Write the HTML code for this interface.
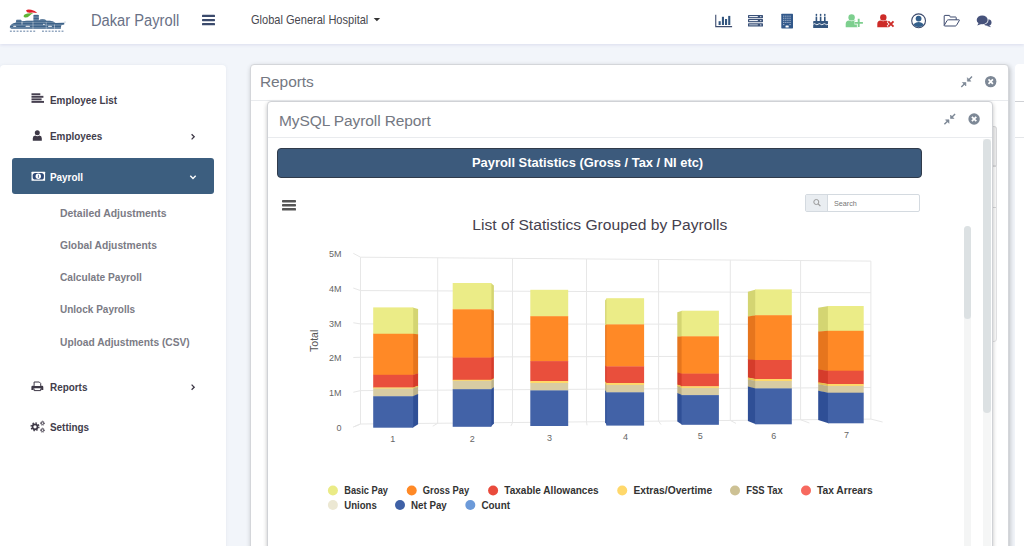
<!DOCTYPE html>
<html>
<head>
<meta charset="utf-8">
<title>Dakar Payroll</title>
<style>
*{box-sizing:border-box;margin:0;padding:0}
html,body{width:1024px;height:546px;overflow:hidden}
body{background:#f2f5fa;font-family:"Liberation Sans",sans-serif;position:relative;color:#333}
.abs{position:absolute}
#hdr{left:0;top:0;width:1024px;height:44px;background:#fff;box-shadow:0 1px 3px rgba(140,140,200,.22)}
#brand{left:91px;top:11px;font-size:16px;color:#697186;white-space:nowrap;line-height:20px;transform-origin:0 50%;transform:scaleX(.918)}
#org{left:251px;top:12px;font-size:13px;color:#48484f;white-space:nowrap;line-height:16px;transform-origin:0 50%;transform:scaleX(.85)}
#side{left:0;top:65px;width:226px;height:490px;background:#fff;border-radius:4px 4px 0 0;box-shadow:0 0 3px rgba(120,130,160,.12)}
.mi{position:absolute;left:50px;font-size:11px;font-weight:bold;color:#423d4c;white-space:nowrap;line-height:14px;transform-origin:0 50%;transform:scaleX(.9)}
.sub{position:absolute;left:60px;font-size:11px;font-weight:bold;color:#7b7b85;white-space:nowrap;line-height:14px;transform-origin:0 50%;transform:scaleX(.93)}
#act{left:12px;top:158px;width:202px;height:36px;background:#3c5e7f;border-radius:3px}
#main{left:1014.7px;top:63.5px;width:30px;height:500px;background:#fff;border-radius:4px}
#w1{left:250px;top:64px;width:759px;height:500px;background:#fff;border:1px solid #d4d6da;border-radius:4px;box-shadow:1px 2px 5px rgba(0,0,0,.24)}
#w2{left:267px;top:101px;width:726px;height:470px;background:#fff;border:1px solid #d0d2d6;border-radius:4px;box-shadow:0 2px 4px rgba(0,0,0,.24)}
.wt{position:absolute;font-size:15.5px;color:#747882;white-space:nowrap;line-height:20px;letter-spacing:-.1px}
#ban{left:277px;top:148px;width:645px;height:30px;background:#3c5a7c;border:1px solid #303b4b;border-radius:4px;color:#fff;font-weight:bold;font-size:12.9px;text-align:left;padding-left:194px;line-height:28px;white-space:nowrap}
#srch{left:805px;top:194px;width:115px;height:18px;border:1px solid #d4dae0;border-radius:2px;background:#fff}
#srch i{position:absolute;left:0;top:0;width:22px;height:16px;background:#e9edf1;border-right:1px solid #d4dae0}
#srch span{position:absolute;left:28px;top:3.5px;font-size:8px;color:#777;line-height:10px;transform-origin:0 50%;transform:scaleX(.9)}
</style>
</head>
<body>
<div id="hdr" class="abs"></div>
<div id="brand" class="abs">Dakar Payroll</div>
<div id="org" class="abs">Global General Hospital</div>

<div id="side" class="abs"></div>
<div class="mi" style="top:92.7px">Employee List</div>
<div class="mi" style="top:129px">Employees</div>
<div id="act" class="abs"></div>
<div class="mi" style="top:170px;color:#fff">Payroll</div>
<div class="sub" style="top:205.6px;transform:scaleX(.95)">Detailed Adjustments</div>
<div class="sub" style="top:237.6px;transform:scaleX(.936)">Global Adjustments</div>
<div class="sub" style="top:269.8px;transform:scaleX(.924)">Calculate Payroll</div>
<div class="sub" style="top:301.8px;transform:scaleX(.91)">Unlock Payrolls</div>
<div class="sub" style="top:334.8px">Upload Adjustments (CSV)</div>
<div class="mi" style="top:380px">Reports</div>
<div class="mi" style="top:419.8px">Settings</div>

<div id="main" class="abs"></div>
<div class="abs" style="left:1015px;top:101px;width:9px;height:1px;background:#cfd1d5"></div>
<div class="abs" style="left:1015px;top:137px;width:9px;height:1px;background:#e4e6e9"></div>
<div id="w1" class="abs"></div>
<div class="wt" style="left:260px;top:72px">Reports</div>
<div class="abs" style="left:251px;top:100px;width:757px;height:1px;background:#e9ebee"></div>
<div class="abs" style="left:985px;top:126px;width:11.5px;height:216px;background:#fafafa;border:1px solid #e2e2e4;border-radius:0 3px 3px 0"></div>
<div class="abs" style="left:985px;top:126px;width:11.5px;height:40px;background:#eeeeef;border:1px solid #d9d9db;border-radius:0 3px 0 0"></div>
<div class="abs" style="left:992px;top:165.600px;width:4px;height:1px;background:#d6d6d8"></div>
<div class="abs" style="left:992px;top:206.500px;width:4px;height:1px;background:#d6d6d8"></div>
<div id="w2" class="abs"></div>
<div class="abs" style="left:983.3px;top:138.500px;width:8px;height:420px;background:#f5f6f6"></div>
<div class="abs" style="left:983.3px;top:138.500px;width:8px;height:274px;background:#dce1e3;border-radius:4px"></div>
<div class="abs" style="left:963.5px;top:226.400px;width:7.3px;height:330px;background:#f4f5f5;border-radius:4px 4px 0 0"></div>
<div class="abs" style="left:963.5px;top:226.400px;width:7.3px;height:92.600px;background:#dce1e3;border-radius:3.6px"></div>
<div class="wt" style="left:279px;top:111px">MySQL Payroll Report</div>
<div class="abs" style="left:268px;top:137px;width:724px;height:1px;background:#e9ebee"></div>
<div id="ban" class="abs">Payroll Statistics (Gross / Tax / NI etc)</div>
<div id="srch" class="abs"><i></i><span>Search</span></div>

<svg class="abs" style="left:0;top:0" width="1024" height="546" viewBox="0 0 1024 546">
<g stroke="#e7e7e7" stroke-width="1" fill="none">
<path d="M353.3 253.3 L360.5 257.2 L870.9 261.1"/>
<path d="M353.3 288.04 L360.5 290.56 L870.9 292.7"/>
<path d="M353.3 322.78 L360.5 323.92 L870.9 324.3"/>
<path d="M353.3 357.52 L360.5 357.28 L870.9 355.9"/>
<path d="M353.3 392.26 L360.5 390.64 L870.9 387.5"/>
<path d="M353.3 427 L360.5 424 L870.9 419.1"/>
<path d="M360.5 257.2 L360.5 424 L353.3 427"/>
<path d="M437.7 257.79 L437.7 423.26 L432.8 426.2"/>
<path d="M512.5 258.36 L512.5 422.54 L510.9 426"/>
<path d="M586.5 258.93 L586.5 421.83 L587 425.3"/>
<path d="M658.6 259.48 L658.6 421.14 L661 424.6"/>
<path d="M730.3 260.03 L730.3 420.45 L736 423.4"/>
<path d="M800.6 260.56 L800.6 419.77 L809.4 423"/>
<path d="M870.9 261.1 L870.9 419.1 L882.6 422"/>
</g>
<path d="M412.6 307.4 L418.1 308.98 L418.1 334.52 L412.6 334.05Z" fill="#d4d572"/>
<path d="M412.6 333.75 L418.1 334.22 L418.1 373.85 L412.6 375.1Z" fill="#e6751d"/>
<path d="M412.6 374.8 L418.1 373.55 L418.1 386.01 L412.6 387.8Z" fill="#d53c2b"/>
<path d="M412.6 387.5 L418.1 385.71 L418.1 387.07 L412.6 388.9Z" fill="#e8c04f"/>
<path d="M412.6 388.6 L418.1 386.77 L418.1 394.4 L412.6 396.55Z" fill="#bcb189"/>
<path d="M412.6 396.25 L418.1 394.1 L418.1 424.24 L412.6 427.7Z" fill="#2f4f96"/>
<rect x="373.2" y="307.4" width="40" height="26.65" fill="#ebec87"/>
<rect x="373.2" y="333.75" width="40" height="41.35" fill="#ff8926"/>
<rect x="373.2" y="374.8" width="40" height="13" fill="#e94f3c"/>
<rect x="373.2" y="387.5" width="40" height="1.4" fill="#ffd968"/>
<rect x="373.2" y="388.6" width="40" height="7.95" fill="#d8cca3"/>
<rect x="373.2" y="396.25" width="40" height="31.45" fill="#4262a7"/>
<path d="M490.8 283 L493.9 285.6 L493.9 311.1 L490.8 309.6Z" fill="#d4d572"/>
<path d="M490.8 309.3 L493.9 310.8 L493.9 357.37 L490.8 357.9Z" fill="#e6751d"/>
<path d="M490.8 357.6 L493.9 357.07 L493.9 378.64 L490.8 380.1Z" fill="#d53c2b"/>
<path d="M490.8 379.8 L493.9 378.34 L493.9 379.6 L490.8 381.1Z" fill="#e8c04f"/>
<path d="M490.8 380.8 L493.9 379.3 L493.9 387.64 L490.8 389.5Z" fill="#bcb189"/>
<path d="M490.8 389.2 L493.9 387.34 L493.9 423.38 L490.8 426.8Z" fill="#2f4f96"/>
<rect x="452.7" y="283" width="38.7" height="26.6" fill="#ebec87"/>
<rect x="452.7" y="309.3" width="38.7" height="48.6" fill="#ff8926"/>
<rect x="452.7" y="357.6" width="38.7" height="22.5" fill="#e94f3c"/>
<rect x="452.7" y="379.8" width="38.7" height="1.3" fill="#ffd968"/>
<rect x="452.7" y="380.8" width="38.7" height="8.7" fill="#d8cca3"/>
<rect x="452.7" y="389.2" width="38.7" height="37.6" fill="#4262a7"/>
<rect x="530.3" y="289.8" width="37.9" height="26.7" fill="#ebec87"/>
<rect x="530.3" y="316.2" width="37.9" height="45.2" fill="#ff8926"/>
<rect x="530.3" y="361.1" width="37.9" height="20.2" fill="#e94f3c"/>
<rect x="530.3" y="381" width="37.9" height="2.3" fill="#ffd968"/>
<rect x="530.3" y="383" width="37.9" height="7.7" fill="#d8cca3"/>
<rect x="530.3" y="390.4" width="37.9" height="35.6" fill="#4262a7"/>
<path d="M607 298.2 L605.1 300.17 L605.1 325.57 L607 324.7Z" fill="#d4d572"/>
<path d="M607 324.4 L605.1 325.27 L605.1 365.8 L607 366.7Z" fill="#e6751d"/>
<path d="M607 366.4 L605.1 365.5 L605.1 381.7 L607 383.3Z" fill="#d53c2b"/>
<path d="M607 383 L605.1 381.4 L605.1 383.52 L607 385.2Z" fill="#e8c04f"/>
<path d="M607 384.9 L605.1 383.22 L605.1 390.61 L607 392.6Z" fill="#bcb189"/>
<path d="M607 392.3 L605.1 390.31 L605.1 422.23 L607 425.6Z" fill="#2f4f96"/>
<rect x="606.4" y="298.2" width="37.7" height="26.5" fill="#ebec87"/>
<rect x="606.4" y="324.4" width="37.7" height="42.3" fill="#ff8926"/>
<rect x="606.4" y="366.4" width="37.7" height="16.9" fill="#e94f3c"/>
<rect x="606.4" y="383" width="37.7" height="2.2" fill="#ffd968"/>
<rect x="606.4" y="384.9" width="37.7" height="7.7" fill="#d8cca3"/>
<rect x="606.4" y="392.3" width="37.7" height="33.3" fill="#4262a7"/>
<path d="M682.2 310.7 L677.3 312.14 L677.3 336.97 L682.2 336.6Z" fill="#d4d572"/>
<path d="M682.2 336.3 L677.3 336.67 L677.3 372.7 L682.2 373.9Z" fill="#e6751d"/>
<path d="M682.2 373.6 L677.3 372.4 L677.3 384.87 L682.2 386.6Z" fill="#d53c2b"/>
<path d="M682.2 386.3 L677.3 384.57 L677.3 386.4 L682.2 388.2Z" fill="#e8c04f"/>
<path d="M682.2 387.9 L677.3 386.1 L677.3 393.3 L682.2 395.4Z" fill="#bcb189"/>
<path d="M682.2 395.1 L677.3 393 L677.3 421.46 L682.2 424.8Z" fill="#2f4f96"/>
<rect x="681.6" y="310.7" width="37.3" height="25.9" fill="#ebec87"/>
<rect x="681.6" y="336.3" width="37.3" height="37.6" fill="#ff8926"/>
<rect x="681.6" y="373.6" width="37.3" height="13" fill="#e94f3c"/>
<rect x="681.6" y="386.3" width="37.3" height="1.9" fill="#ffd968"/>
<rect x="681.6" y="387.9" width="37.3" height="7.5" fill="#d8cca3"/>
<rect x="681.6" y="395.1" width="37.3" height="29.7" fill="#4262a7"/>
<path d="M755.9 289.4 L747.9 291.74 L747.9 316.75 L755.9 315.5Z" fill="#d4d572"/>
<path d="M755.9 315.2 L747.9 316.45 L747.9 359.67 L755.9 360.3Z" fill="#e6751d"/>
<path d="M755.9 360 L747.9 359.37 L747.9 377.87 L755.9 379.3Z" fill="#d53c2b"/>
<path d="M755.9 379 L747.9 377.57 L747.9 379.79 L755.9 381.3Z" fill="#e8c04f"/>
<path d="M755.9 381 L747.9 379.49 L747.9 386.88 L755.9 388.7Z" fill="#bcb189"/>
<path d="M755.9 388.4 L747.9 386.58 L747.9 420.98 L755.9 424.3Z" fill="#2f4f96"/>
<rect x="755.3" y="289.4" width="36.5" height="26.1" fill="#ebec87"/>
<rect x="755.3" y="315.2" width="36.5" height="45.1" fill="#ff8926"/>
<rect x="755.3" y="360" width="36.5" height="19.3" fill="#e94f3c"/>
<rect x="755.3" y="379" width="36.5" height="2.3" fill="#ffd968"/>
<rect x="755.3" y="381" width="36.5" height="7.7" fill="#d8cca3"/>
<rect x="755.3" y="388.4" width="36.5" height="35.9" fill="#4262a7"/>
<path d="M828.5 306 L818.2 307.64 L818.2 331.7 L828.5 331.1Z" fill="#d4d572"/>
<path d="M828.5 330.8 L818.2 331.4 L818.2 369.92 L828.5 371Z" fill="#e6751d"/>
<path d="M828.5 370.7 L818.2 369.62 L818.2 382.66 L828.5 384.3Z" fill="#d53c2b"/>
<path d="M828.5 384 L818.2 382.36 L818.2 384.48 L828.5 386.2Z" fill="#e8c04f"/>
<path d="M828.5 385.9 L818.2 384.18 L818.2 391 L828.5 393Z" fill="#bcb189"/>
<path d="M828.5 392.7 L818.2 390.7 L818.2 420.02 L828.5 423.3Z" fill="#2f4f96"/>
<rect x="827.9" y="306" width="35.8" height="25.1" fill="#ebec87"/>
<rect x="827.9" y="330.8" width="35.8" height="40.2" fill="#ff8926"/>
<rect x="827.9" y="370.7" width="35.8" height="13.6" fill="#e94f3c"/>
<rect x="827.9" y="384" width="35.8" height="2.2" fill="#ffd968"/>
<rect x="827.9" y="385.9" width="35.8" height="7.1" fill="#d8cca3"/>
<rect x="827.9" y="392.7" width="35.8" height="30.6" fill="#4262a7"/>
<g font-family="Liberation Sans, sans-serif" font-size="9" fill="#666" text-anchor="end">
<text x="341.5" y="257.4">5M</text>
<text x="341.5" y="292.02">4M</text>
<text x="341.5" y="326.64">3M</text>
<text x="341.5" y="361.26">2M</text>
<text x="341.5" y="395.88">1M</text>
<text x="341.5" y="430.5">0</text>
</g>
<g font-family="Liberation Sans, sans-serif" font-size="9" fill="#666" text-anchor="middle">
<text x="392.7" y="442.4">1</text>
<text x="472.2" y="442">2</text>
<text x="549.4" y="440.9">3</text>
<text x="625.6" y="439.9">4</text>
<text x="700.3" y="439.1">5</text>
<text x="773.8" y="438.7">6</text>
<text x="846.5" y="437.9">7</text>
<text transform="translate(317.7 340.8) rotate(-90)" font-size="10.5" fill="#555">Total</text>
</g>
<text x="472.3" y="230.1" font-family="Liberation Sans, sans-serif" font-size="15.5" fill="#45414e" textLength="255" lengthAdjust="spacingAndGlyphs">List of Statistics Grouped by Payrolls</text>
<g font-family="Liberation Sans, sans-serif" font-size="10.2" font-weight="bold" fill="#333">
<circle cx="332.9" cy="490.5" r="5" fill="#eaeb86"/>
<text x="344.3" y="494.3" textLength="43.7" lengthAdjust="spacingAndGlyphs">Basic Pay</text>
<circle cx="411.7" cy="490.5" r="5" fill="#ff8926"/>
<text x="422.8" y="494.3" textLength="46.3" lengthAdjust="spacingAndGlyphs">Gross Pay</text>
<circle cx="493.1" cy="490.5" r="5" fill="#e94b3c"/>
<text x="504.3" y="494.3" textLength="94.3" lengthAdjust="spacingAndGlyphs">Taxable Allowances</text>
<circle cx="622.2" cy="490.5" r="5" fill="#ffd86b"/>
<text x="633.4" y="494.3" textLength="78.8" lengthAdjust="spacingAndGlyphs">Extras/Overtime</text>
<circle cx="735" cy="490.5" r="5" fill="#cdc194"/>
<text x="746.2" y="494.3" textLength="36.6" lengthAdjust="spacingAndGlyphs">FSS Tax</text>
<circle cx="806" cy="490.5" r="5" fill="#f7695f"/>
<text x="817" y="494.3" textLength="55.7" lengthAdjust="spacingAndGlyphs">Tax Arrears</text>
<circle cx="332.9" cy="505" r="5" fill="#ece8d3"/>
<text x="344.3" y="508.6" textLength="32.5" lengthAdjust="spacingAndGlyphs">Unions</text>
<circle cx="400" cy="505" r="5" fill="#3f61a6"/>
<text x="411" y="508.6" textLength="35.8" lengthAdjust="spacingAndGlyphs">Net Pay</text>
<circle cx="470.3" cy="505" r="5" fill="#6c9ad9"/>
<text x="481.4" y="508.6" textLength="28.6" lengthAdjust="spacingAndGlyphs">Count</text>
</g>
<!-- header hamburger -->
<g fill="#3b4a6c"><rect x="202" y="14.800" width="13" height="2.300" rx=".6"/><rect x="202" y="18.900" width="13" height="2.300" rx=".6"/><rect x="202" y="23" width="13" height="2.300" rx=".6"/></g>
<path d="M373.7 18h6.4l-3.2 3.3z" fill="#333"/>
<!-- bar chart -->
<g fill="#34567f"><path d="M715.2 14.8h1.1v11.3h15.8v1.2h-16.9z" fill="#3d4c6e"/><rect x="718.6" y="21.2" width="2.1" height="3.8"/><rect x="721.9" y="16.8" width="2.1" height="8.2"/><rect x="725" y="19" width="2.1" height="6"/><rect x="728.2" y="15.9" width="2.1" height="9.1"/></g>
<!-- server -->
<g fill="#3b5279"><rect x="748" y="15" width="15" height="3.2" rx=".6"/><rect x="748" y="19" width="15" height="3.2" rx=".6"/><rect x="748" y="23.2" width="15" height="3.4" rx=".6"/></g>
<g fill="#e9edf3"><rect x="749.2" y="16" width="8.6" height="1.1"/><rect x="749.2" y="20" width="8.6" height="1.1"/><rect x="749.2" y="24.3" width="8.6" height="1.1" fill="#b9c3d3"/><circle cx="760.8" cy="16.6" r=".7"/><circle cx="760.8" cy="20.6" r=".7"/><circle cx="760.8" cy="24.9" r=".7"/></g>
<!-- building -->
<rect x="781.3" y="13.7" width="11.7" height="14.7" rx=".6" fill="#31588a"/>
<g fill="#b7c4d8"><rect x="783.2" y="15.6" width="1.1" height="1.1"/><rect x="785.3" y="15.6" width="1.1" height="1.1"/><rect x="787.4" y="15.6" width="1.1" height="1.1"/><rect x="789.5" y="15.6" width="1.1" height="1.1"/>
<rect x="783.2" y="17.7" width="1.1" height="1.1"/><rect x="785.3" y="17.7" width="1.1" height="1.1"/><rect x="787.4" y="17.7" width="1.1" height="1.1"/><rect x="789.5" y="17.7" width="1.1" height="1.1"/>
<rect x="783.2" y="19.8" width="1.1" height="1.1"/><rect x="785.3" y="19.8" width="1.1" height="1.1"/><rect x="787.4" y="19.8" width="1.1" height="1.1"/><rect x="789.5" y="19.8" width="1.1" height="1.1"/>
<rect x="783.2" y="21.9" width="1.1" height="1.1"/><rect x="785.3" y="21.9" width="1.1" height="1.1"/><rect x="787.4" y="21.9" width="1.1" height="1.1"/><rect x="789.5" y="21.9" width="1.1" height="1.1"/>
<rect x="783.2" y="24" width="1.1" height="1.1"/><rect x="789.5" y="24" width="1.1" height="1.1"/></g>
<rect x="785.5" y="25.5" width="3.2" height="1.9" rx=".5" fill="#fff"/>
<!-- cake -->
<g fill="#34567f"><path d="M813.2 21.6q0-.7.7-.7h13.4q.7 0 .7.700v6.4h-14.8z"/><rect x="815.6" y="16.6" width="1.6" height="4.6"/><rect x="819.8" y="16.6" width="1.6" height="4.6"/><rect x="824" y="16.600" width="1.6" height="4.6"/>
<ellipse cx="816.4" cy="14.900" rx=".85" ry="1.150"/><ellipse cx="820.6" cy="14.900" rx=".85" ry="1.150"/><ellipse cx="824.8" cy="14.900" rx=".85" ry="1.150"/></g>
<path d="M813.200 24.200q1.230-1.100 2.470 0t2.470 0t2.470 0t2.470 0t2.470 0t2.450 0" stroke="#fff" stroke-width=".9" fill="none"/>
<!-- user plus -->
<g fill="#7dcf8e"><circle cx="851.6" cy="17.4" r="3.2"/><path d="M845.700 27.300v-3.300q0-3.200 3.400-3.500q2.500 1.400 5 0q3.400.3 3.400 3.500v3.300z"/></g>
<path d="M858.700 18.500v8.600M854.400 22.800h8.600" stroke="#fff" stroke-width="3.600"/>
<path d="M858.700 18.700v8.400M854.600 22.900h8.300" stroke="#7dcf8e" stroke-width="1.900"/>
<!-- user times -->
<g fill="#cd2b28"><circle cx="883.3" cy="17.4" r="3.2"/><path d="M877.300 27.300v-3.300q0-3.200 3.400-3.500q2.500 1.400 5 0q3.400.3 3.400 3.500v3.300z"/></g>
<path d="M888 21.100l5.800 5.800M893.800 21.100l-5.800 5.800" stroke="#fff" stroke-width="3.600"/>
<path d="M888.300 21.400l5.200 5.200M893.500 21.400l-5.200 5.200" stroke="#cd2b28" stroke-width="1.900"/>
<!-- user circle -->
<clipPath id="uc"><circle cx="918.6" cy="20.800" r="6.300"/></clipPath>
<circle cx="918.6" cy="20.800" r="6.900" fill="#fff" stroke="#3c4a6c" stroke-width="1.100"/>
<g fill="#34608c" clip-path="url(#uc)"><circle cx="918.6" cy="18.600" r="2.900"/><ellipse cx="918.6" cy="27.600" rx="6.300" ry="5.600"/></g>
<!-- folder open -->
<path d="M956.200 19.800v-2.200q0-.6-.6-.6h-5.200q-.5 0-.5-.5v-.5q0-.6-.6-.6h-4.500q-.6 0-.6.600v9.400l3-5q.4-.6 1.100-.6h10.600q.8 0 .4.700l-2.800 4.800q-.4.700-1.200.7h-10.500q-.6 0-.6-.600" fill="none" stroke="#3d4a6e" stroke-width="1" stroke-linejoin="round"/>
<!-- comments -->
<g fill="#46527b"><ellipse cx="987.500" cy="22.500" rx="4" ry="3.300"/><path d="M988.500 24.500l2.600 2.800l-4-1.300z"/></g>
<ellipse cx="982.200" cy="19.900" rx="6.300" ry="5.100" fill="#fff"/>
<g fill="#46527b"><ellipse cx="982.200" cy="19.900" rx="5.500" ry="4.300"/><path d="M978.800 22.800l-1.600 2.700l4.200-1.600z"/></g>
<!-- sidebar: align-left -->
<g fill="#453f4f"><rect x="31.5" y="93.300" width="8.800" height="1.900"/><rect x="31.5" y="95.850" width="11.900" height="1.900"/><rect x="31.500" y="98.400" width="10.100" height="1.900"/><rect x="31.500" y="100.950" width="12.500" height="1.900"/></g>
<!-- user -->
<g fill="#3d3846"><circle cx="37.300" cy="132.700" r="2.500"/><path d="M32.800 140.700v-2.400q0-2.500 2.500-2.700q2 1.100 4 0q2.500.200 2.500 2.700v2.400z"/></g>
<!-- money -->
<rect x="31.500" y="171.800" width="13.600" height="9" rx=".5" fill="#fff"/>
<rect x="32.700" y="173" width="11.200" height="6.600" rx="2.600" fill="#2f4a78"/>
<circle cx="38.300" cy="176.300" r="2.700" fill="#fff"/>
<rect x="37.900" y="174.800" width=".9" height="3" fill="#44608c"/>
<!-- print -->
<g fill="#3d3846"><path d="M31.400 386.900q0-1.200 1.200-1.200h9.500q1.200 0 1.200 1.200v3.100h-2.100v-1.600h-7.700v1.600h-2.100z"/></g>
<path d="M34.100 385.900v-3.900h5.200l1.400 1.400v2.500M34.100 388.600v2h6.600v-2" fill="#fff" stroke="#3d3846" stroke-width="1"/>
<!-- cogs -->
<g fill="none" stroke="#3d3846"><circle cx="35" cy="426.800" r="2.500" stroke-width="1.700"/><circle cx="35" cy="426.800" r="3.900" stroke-width="1.300" stroke-dasharray="1.500 1.560"/>
<circle cx="42.500" cy="423.200" r="1.200" stroke-width=".9"/><circle cx="42.500" cy="423.200" r="2" stroke-width=".9" stroke-dasharray=".9 .67"/>
<circle cx="42.500" cy="430.200" r="1.200" stroke-width=".9"/><circle cx="42.500" cy="430.200" r="2" stroke-width=".9" stroke-dasharray=".9 .67"/></g>
<!-- chevrons -->
<path d="M191.600 134.200l2.600 2.600l-2.600 2.600" fill="none" stroke="#3d3846" stroke-width="1.300"/>
<path d="M191.600 384.600l2.600 2.600l-2.600 2.600" fill="none" stroke="#3d3846" stroke-width="1.300"/>
<path d="M190.300 175.800l2.700 2.700l2.700-2.700" fill="none" stroke="#fff" stroke-width="1.400"/>
<!-- chart hamburger -->
<g fill="#555"><rect x="282" y="199.900" width="14" height="2.500" rx=".7"/><rect x="282" y="204" width="14" height="2.500" rx=".7"/><rect x="282" y="208.100" width="14" height="2.500" rx=".7"/></g>
<!-- search icon -->
<circle cx="816.300" cy="202" r="2.500" fill="none" stroke="#999" stroke-width="1"/><path d="M818.200 203.900l2.200 2.200" stroke="#999" stroke-width="1.200"/>
<!-- window icons -->
<g id="cmp" fill="#7d8896" stroke="#7d8896"><path d="M972 76.600l-3.300 3.300M961.300 87l3.300-3.300" stroke-width="1.400" fill="none"/><path d="M967.400 77.700v3.500h3.500zM965.900 86v-3.500h-3.500z" stroke-width=".6" stroke-linejoin="round"/></g>
<g transform="translate(-16.9 37.3)"><g fill="#7d8896" stroke="#7d8896"><path d="M972 76.600l-3.300 3.300M961.300 87l3.300-3.300" stroke-width="1.400" fill="none"/><path d="M967.400 77.700v3.500h3.500zM965.900 86v-3.500h-3.500z" stroke-width=".6" stroke-linejoin="round"/></g></g>
<g id="cls"><circle cx="990.700" cy="81.600" r="5.700" fill="#7d8896"/><path d="M988.500 79.400l4.400 4.400M992.900 79.400l-4.400 4.400" stroke="#fff" stroke-width="1.700"/></g>
<g transform="translate(-16.6 37.4)"><g><circle cx="990.700" cy="81.600" r="5.700" fill="#7d8896"/><path d="M988.500 79.400l4.400 4.400M992.900 79.400l-4.400 4.400" stroke="#fff" stroke-width="1.700"/></g></g>
<!-- logo -->
<clipPath id="lg"><path d="M9.800 27Q10 24.600 13 23.500L16 22.600L16.200 20.300Q16.300 19.800 16.800 19.800L20.800 19.700Q21.300 19.700 21.400 20.200L21.500 21.500Q24 20.800 27 20.800L33.500 20.800L33.500 15.600Q33.500 14.700 34.500 14.700L37.800 14.700Q38.800 14.700 38.800 15.600L38.800 20.500Q40.800 19 42.800 19.100Q45.400 19.300 46.500 20.800L50 20.800Q53.500 21 55.500 23L64.200 22.800L64.200 24.500L61.200 25.300L60.800 28.800L13 28.800Q9.800 28.800 9.800 27Z"/></clipPath>
<g clip-path="url(#lg)" fill="#3e6389"><rect x="9" y="14.700" width="56" height="1.250"/><rect x="9" y="16.300" width="56" height="1.250"/><rect x="9" y="17.900" width="56" height="1.250"/><rect x="9" y="19.500" width="56" height="1.250"/><rect x="9" y="21.100" width="56" height="1.250"/><rect x="9" y="22.700" width="56" height="1.300"/><rect x="9" y="24.300" width="56" height="1.300"/><rect x="9" y="25.900" width="56" height="1.300"/><rect x="9" y="27.500" width="56" height="1.300"/></g>
<g clip-path="url(#lg)" fill="#3e6389" opacity=".5"><rect x="9" y="14" width="56" height="15"/></g>
<g fill="#fff" opacity=".8"><rect x="13.200" y="25.700" width="3" height="1.300" rx=".6"/><rect x="21.600" y="22" width=".8" height="2.600"/><rect x="25.500" y="25.700" width="4.500" height="1.200" rx=".6"/><rect x="32.600" y="21.600" width=".8" height="7.200" opacity=".6"/><rect x="43" y="23.800" width="1.800" height="1.300" rx=".6"/><rect x="45.800" y="22" width=".7" height="6.800" opacity=".6"/><rect x="48" y="25.700" width="4" height="1.200" rx=".6"/><rect x="54.300" y="24.500" width=".7" height="4.300" opacity=".7"/></g>
<path d="M26 10.500Q27.300 8.900 31.200 9.800Q35.200 10.800 37.300 13Q33 12.100 30 12.700Q26.500 12.900 26 10.500Z" fill="#e0222b"/>
<path d="M23.600 16.200Q23.800 14 27.500 13.400Q30.500 13 33.200 12.900Q30.700 14.300 29.300 15.900Q27.300 17.900 25 17.500Q23.600 17.200 23.600 16.200Z" fill="#5fb337"/>
<path d="M9.900 31.150H36.600" stroke="#93a7c0" stroke-width="1.500" stroke-dasharray="1.900 1.440" fill="none"/><path d="M42 31.150H64.800" stroke="#93a7c0" stroke-width="1.500" stroke-dasharray="1.900 1.360" fill="none"/>
<circle cx="65" cy="22" r=".5" fill="#7f97b3"/>

</svg>
</body>
</html>
